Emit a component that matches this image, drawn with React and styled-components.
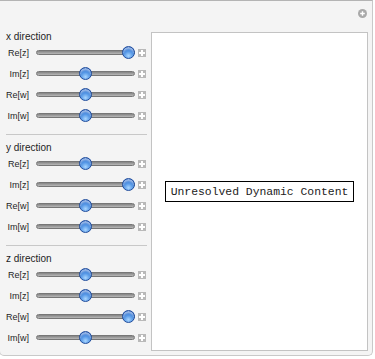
import React from 'react';
import styled, { createGlobalStyle } from 'styled-components';

const GlobalStyle = createGlobalStyle`
    html, body {
        margin: 0;
        padding: 0;
        background: #ffffff;
    }
    body {
        font-family: "Liberation Sans", Arial, sans-serif;
    }
`

const sections = [
    { title: 'x direction', values: [1, 0.5, 0.5, 0.5] },
    { title: 'y direction', values: [0.5, 1, 0.5, 0.5] },
    { title: 'z direction', values: [0.5, 0.5, 1, 0.5] },
];
const labels = ['Re[z]', 'Im[z]', 'Re[w]', 'Im[w]'];

function PlusCircle() {
    return (
        <svg width="9" height="9" viewBox="0 0 9 9">
            <circle cx="4.5" cy="4.5" r="4.5" fill="#a9a9a9" />
            <path d="M4.5 2.2v4.6M2.2 4.5h4.6" stroke="#fff" strokeWidth="1.4" />
        </svg>
    );
}

function Slider({ value }) {
    return (
        <Track>
            <Thumb style={{ left: `${value * 86}px` }} />
        </Track>
    );
}

function App() {
    return (
        <>
            <GlobalStyle />
            <Panel>
                <TopBar>
                    <PlusCircle />
                </TopBar>
                <Body>
                    <Controls>
                        {sections.map((section, si) => (
                            <Section key={section.title}>
                                {si > 0 && <Separator />}
                                <Heading>{section.title}</Heading>
                                {labels.map((label, i) => (
                                    <Row key={label}>
                                        <Label>{label}</Label>
                                        <Slider value={section.values[i]} />
                                        <PlusBox />
                                    </Row>
                                ))}
                            </Section>
                        ))}
                    </Controls>
                    <Output>
                        <Unresolved>Unresolved Dynamic Content</Unresolved>
                    </Output>
                </Body>
            </Panel>
        </>
    );
}

const Panel = styled.div`
    width: 374px;
    height: 356px;
    margin: 0 0 0 -1px;
    box-sizing: border-box;
    background: #f4f4f4;
    border: 1px solid #c9c9c9;
    border-top-color: #b4b4b4;
    border-radius: 0 0 5px 5px;
    display: flex;
    flex-direction: column;
`
const TopBar = styled.div`
    height: 31px;
    display: flex;
    justify-content: flex-end;
    align-items: flex-start;
    padding: 8px 5px 0 0;
    box-sizing: border-box;
`
const Body = styled.div`
    display: flex;
    flex: 1;
    padding: 0 4px 4px 0;
`
const Controls = styled.div`
    width: 151px;
    display: flex;
    flex-direction: column;
`
const Section = styled.div`
    display: flex;
    flex-direction: column;
`
const Separator = styled.div`
    height: 1px;
    margin: 8px 4px 8px 6px;
    background: #c8c8c8;
`
const Heading = styled.div`
    height: 10px;
    line-height: 10px;
    font-size: 10px;
    color: #1e1e1e;
    padding-left: 6px;
`
const Row = styled.div`
    height: 21px;
    display: flex;
    align-items: center;
`
const Label = styled.div`
    width: 29px;
    text-align: right;
    font-size: 9px;
    color: #1e1e1e;
    margin-right: 7px;
`
const Track = styled.div`
    position: relative;
    width: 99px;
    height: 5px;
    border-radius: 3px;
    border: 1px solid #777;
    box-sizing: border-box;
    background: linear-gradient(#848484, #b8b8b8);
`
const Thumb = styled.div`
    position: absolute;
    top: -5px;
    width: 13px;
    height: 13px;
    margin-left: -1px;
    border-radius: 50%;
    box-sizing: border-box;
    border: 1px solid #1f4c9c;
    background: radial-gradient(circle at 50% 80%, #a9d6ff 0%, #4f93e4 45%, #2762c4 85%);
    box-shadow: inset 0 2px 2px rgba(255, 255, 255, 0.55);
`
const PlusBox = styled.div`
    position: relative;
    width: 8px;
    height: 8px;
    margin-left: 3px;
    background: #b9b9b9;
    &::before, &::after {
        content: '';
        position: absolute;
        background: #fff;
    }
    &::before {
        left: 1px;
        top: 3px;
        width: 6px;
        height: 2px;
    }
    &::after {
        left: 3px;
        top: 1px;
        width: 2px;
        height: 6px;
    }
`
const Output = styled.div`
    flex: 1;
    background: #ffffff;
    border: 1px solid #c3c3c3;
    display: flex;
    align-items: center;
    justify-content: center;
`
const Unresolved = styled.div`
    font-family: "Liberation Mono", "Courier New", monospace;
    font-size: 11.4px;
    color: #222;
    border: 1px solid #000;
    padding: 4px 5px 3px;
`

export default App
